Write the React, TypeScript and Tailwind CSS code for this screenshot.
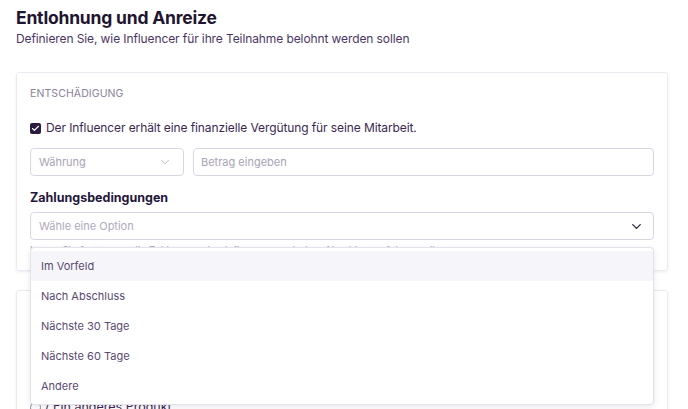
import { ChevronDown, Check } from 'lucide-react';

const options = ['Im Vorfeld', 'Nach Abschluss', 'Nächste 30 Tage', 'Nächste 60 Tage', 'Andere'];

export default function App() {
  return (
    <div className="w-[688px] h-[409px] overflow-hidden bg-white font-['Inter',sans-serif] text-[#2a1b3d]">
      <div className="px-4 pt-[7px]">
        <h1 className="text-[17.5px] font-bold leading-[22px] text-[#1f1530] tracking-[-0.2px]">Entlohnung und Anreize</h1>
        <p className="text-[12px] leading-[16px] mt-[2px] text-[#4b3566] tracking-[-0.1px]">
          Definieren Sie, wie Influencer für ihre Teilnahme belohnt werden sollen
        </p>

        {/* Entschädigung card */}
        <div className="relative mt-[25px] w-[652px] border border-[#ebeaf0] rounded-[3px] shadow-[0_1px_3px_rgba(30,20,60,0.08)] px-[13px] pt-[14px] pb-[14px]">
          <div className="text-[10.5px] uppercase text-[#8a8299] tracking-[0.1px] leading-[14px]">Entschädigung</div>

          <label className="flex items-center gap-[5px] mt-[19px]">
            <span className="w-[11px] h-[11px] rounded-[2px] bg-[#2d1a40] flex items-center justify-center">
              <Check className="w-[9px] h-[9px] text-white" strokeWidth={3} />
            </span>
            <span className="text-[12px] text-[#3b2852] leading-[16px] tracking-[-0.1px]">
              Der Influencer erhält eine finanzielle Vergütung für seine Mitarbeit.
            </span>
          </label>

          <div className="flex gap-[9px] mt-[12px]">
            <div className="w-[154px] h-[28px] border border-[#d9d6e2] rounded-[4px] flex items-center justify-between px-[8px]">
              <span className="text-[11px] text-[#a9a3b6]">Währung</span>
              <ChevronDown className="w-[14px] h-[14px] text-[#b3aec0] mr-[3px]" strokeWidth={1.5} />
            </div>
            <div className="flex-1 h-[28px] border border-[#d9d6e2] rounded-[4px] flex items-center px-[7px]">
              <span className="text-[11px] text-[#a9a3b6]">Betrag eingeben</span>
            </div>
          </div>

          <div className="mt-[14px] text-[12.5px] font-bold text-[#24163a] leading-[16px]">Zahlungsbedingungen</div>
          <div className="relative mt-[6px]">
            <div className="h-[28px] border border-[#d9d6e2] rounded-[4px] flex items-center justify-between px-[8px]">
              <span className="text-[11px] text-[#b0aabd]">Wähle eine Option</span>
              <ChevronDown className="w-[15px] h-[15px] text-[#3a2b4e] mr-[1px]" strokeWidth={2.2} />
            </div>
            <div className="text-[10px] text-[#a9a3b6] mt-[4px] leading-[12px] whitespace-nowrap">
              Legen Sie fest, wann die Zahlung an den Influencer nach dem Abschluss erfolgen soll.
            </div>

            {/* Dropdown */}
            <div className="absolute z-10 left-0 right-0 top-[35px] bg-white border border-[#e3e1ea] rounded-[4px] shadow-[0_2px_6px_rgba(30,20,60,0.10)] py-[3px]">
              {options.map((o, i) => (
                <div
                  key={o}
                  className={`h-[30px] flex items-center px-[10px] text-[11px] text-[#5a4a73] ${i === 0 ? 'bg-[#f6f5fa]' : ''}`}
                >
                  {o}
                </div>
              ))}
            </div>
          </div>
        </div>

        {/* Second card (mostly hidden) */}
        <div className="mt-[19px] w-[652px] h-[140px] border border-[#ebeaf0] rounded-[3px] shadow-[0_1px_3px_rgba(30,20,60,0.08)] px-[13px] pt-[108px]">
          <div className="flex items-center gap-[4px] text-[12.5px] text-[#3b2852] leading-[16px]">
            <span className="w-[11px] h-[11px] rounded-full border border-[#8a8299]" />
            <span>/ Ein anderes Produkt</span>
          </div>
        </div>
      </div>
    </div>
  );
}
